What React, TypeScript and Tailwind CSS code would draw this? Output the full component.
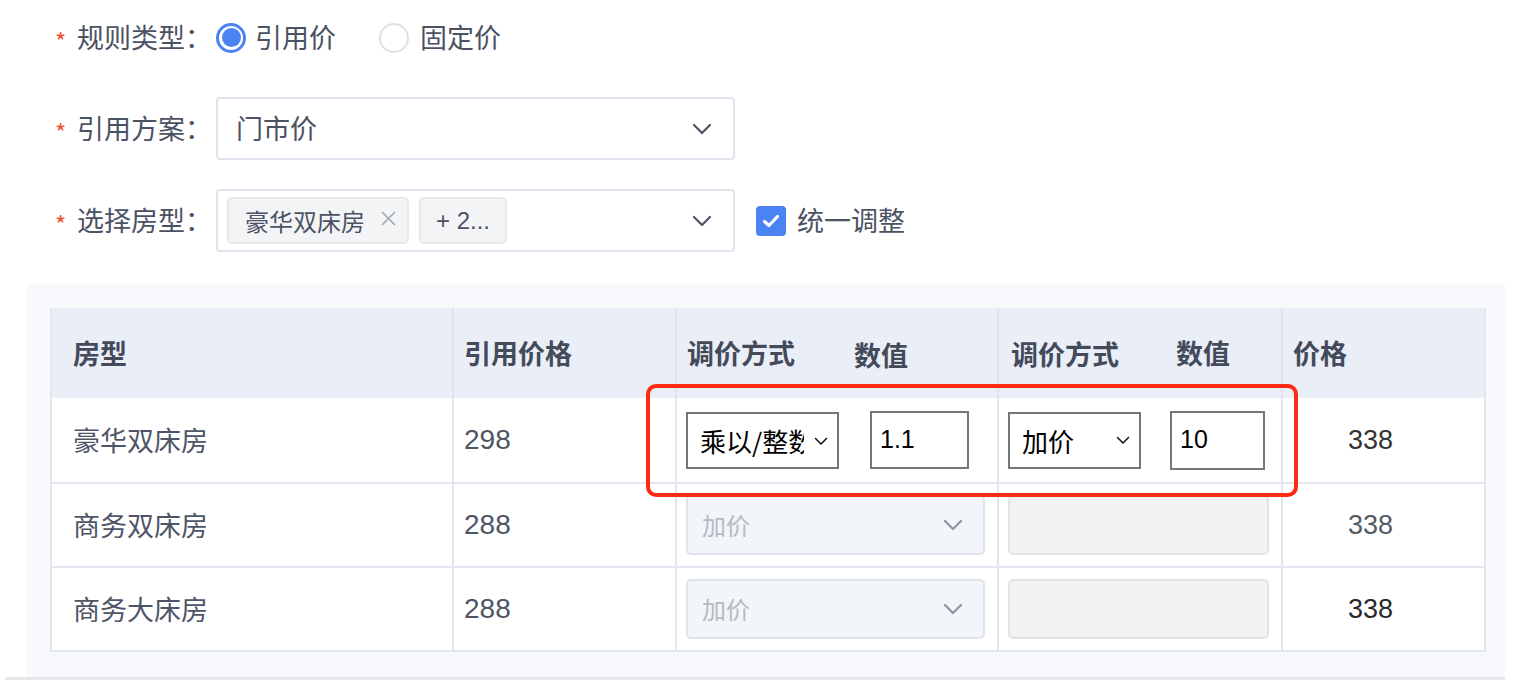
import React from 'react';

const cjk = { fontFamily: '"PingFang SC", "Noto Sans CJK SC", "Noto Sans", sans-serif' };
const sys = { fontFamily: '"Liberation Sans", "Noto Sans CJK SC", Arial, sans-serif' };

const Chevron = ({ className = '' }: { className?: string }) => (
  <svg width="20" height="12" viewBox="0 0 20 12" className={className} fill="none">
    <polyline points="2,2 10,10 18,2" stroke="currentColor" strokeWidth="2.2" strokeLinecap="round" strokeLinejoin="round" />
  </svg>
);

const SmallChevron = () => (
  <svg width="14" height="9" viewBox="0 0 14 9" fill="none">
    <polyline points="1.5,1.5 7,7 12.5,1.5" stroke="#111" strokeWidth="1.5" strokeLinecap="round" strokeLinejoin="round" />
  </svg>
);

function FormRow({ label, children, className = '' }: { label: string; children: React.ReactNode; className?: string }) {
  return (
    <div className={`flex items-center h-[63px] pl-[55px] ${className}`}>
      <span className="w-[22px] text-[24px] text-[#f0502d] leading-none pt-[6px]">*</span>
      <span className="w-[139px] text-[27px] text-[#4b5263]">{label}：</span>
      {children}
    </div>
  );
}

const rows = [
  { name: '豪华双床房', ref: '298', price: '338', priceColor: 'text-[#333]', active: true },
  { name: '商务双床房', ref: '288', price: '338', priceColor: 'text-[#555a63]', active: false },
  { name: '商务大床房', ref: '288', price: '338', priceColor: 'text-[#2a2a2a]', active: false },
];

export default function App() {
  return (
    <div className="w-[1522px] h-[692px] bg-white overflow-hidden" style={cjk}>
      {/* form */}
      <div className="pt-[6px] flex flex-col">
        <FormRow label="规则类型">
          <div className="flex items-center">
            <span className="w-[30px] h-[30px] rounded-full border-[3px] border-[#4b82f4] flex items-center justify-center">
              <span className="w-[19px] h-[19px] rounded-full bg-[#4b82f4]" />
            </span>
            <span className="ml-[9px] text-[27px] text-[#4b5263]">引用价</span>
            <span className="ml-[43px] w-[30px] h-[30px] rounded-full border-2 border-[#dde2ea]" />
            <span className="ml-[11px] text-[27px] text-[#4b5263]">固定价</span>
          </div>
        </FormRow>
        <FormRow label="引用方案" className="mt-[28px]">
          <div className="w-[519px] h-[63px] border-2 border-[#dfe3ec] rounded-[4px] flex items-center justify-between pl-[18px] pr-[21px] text-[#4b5263]">
            <span className="text-[27px]">门市价</span>
            <Chevron />
          </div>
        </FormRow>
        <FormRow label="选择房型" className="mt-[29px]">
          <div className="w-[519px] h-[63px] border-2 border-[#dfe3ec] rounded-[4px] flex items-center justify-between pl-[9px] pr-[21px] text-[#4b5263]">
            <div className="flex gap-[10px]">
              <span className="h-[47px] w-[182px] bg-[#f3f4f6] border-2 border-[#e6e8ec] rounded-[5px] flex items-center pl-[16px] text-[24px]">
                豪华双床房
                <svg width="17" height="17" viewBox="0 0 17 17" className="ml-[15px] -mt-[4px]">
                  <path d="M2 2L15 15M15 2L2 15" stroke="#a1a6b0" strokeWidth="1.6" />
                </svg>
              </span>
              <span className="h-[47px] w-[88px] bg-[#f3f4f6] border-2 border-[#e6e8ec] rounded-[5px] flex items-center pl-[15px] text-[24px]" style={sys}>
                + 2...
              </span>
            </div>
            <Chevron />
          </div>
          <span className="ml-[21px] w-[30px] h-[30px] rounded-[4px] bg-[#4b82f4] flex items-center justify-center">
            <svg width="18" height="14" viewBox="0 0 18 14">
              <polyline points="2.5,7.5 7,11.5 15.5,2.5" fill="none" stroke="#fff" strokeWidth="3.2" strokeLinecap="round" strokeLinejoin="round" />
            </svg>
          </span>
          <span className="ml-[11px] text-[27px] text-[#4b5263]">统一调整</span>
        </FormRow>
      </div>

      {/* table area */}
      <div className="mt-[32px] ml-[5px] w-[1500px] border-b-[3px] border-[#e6e7ea]">
        <div className="ml-[21px] w-[1479px] bg-[#f7f9fc] pt-[24px] pl-[24px] pb-[25px]">
          <div className="relative w-[1436px] border-l-2 border-r-2 border-b-2 border-[#e2e6ee] bg-white">
            <div className="grid grid-cols-[402px_223px_322px_284px_1fr] h-[90px] bg-[#eaeef7] text-[27px] font-bold text-[#434a5a]">
              <div className="border-r-2 border-[#e0e4ed] flex items-center pl-[21px]">房型</div>
              <div className="border-r-2 border-[#e0e4ed] flex items-center pl-[10px]">引用价格</div>
              <div className="border-r-2 border-[#e0e4ed] flex items-center pl-[10px]">
                <span>调价方式</span>
                <span className="ml-[59px] mt-[5px]">数值</span>
              </div>
              <div className="border-r-2 border-[#e0e4ed] flex items-center pl-[12px]">
                <span className="mt-[3px]">调价方式</span>
                <span className="ml-[57px] mt-[1px]">数值</span>
              </div>
              <div className="flex items-center pl-[10px]">价格</div>
            </div>
            {rows.map((r, i) => (
              <div
                key={r.name}
                className={`grid grid-cols-[402px_223px_322px_284px_1fr] h-[84px] text-[27px] text-[#4e5566] ${i > 0 ? 'border-t-2 border-[#e2e6ee]' : ''}`}
              >
                <div className="border-r-2 border-[#e2e6ee] flex items-center pl-[21px]">{r.name}</div>
                <div className="border-r-2 border-[#e2e6ee] flex items-center pl-[10px] text-[28px]" style={sys}>{r.ref}</div>
                {r.active ? (
                  <>
                    <div className="border-r-2 border-[#e2e6ee] flex items-center pl-[9px]">
                      <div className="w-[153px] h-[57px] border-2 border-[#767676] bg-white flex items-center pl-[12px] text-black">
                        <span className="w-[104px] overflow-hidden whitespace-nowrap text-[26px]">乘以/整数</span>
                        <span className="ml-[10px] mt-[2px]"><SmallChevron /></span>
                      </div>
                      <div className="ml-[31px] w-[99px] h-[58px] border-2 border-[#767676] bg-white flex items-center pl-[8px] text-[25px] text-black" style={sys}>
                        1.1
                      </div>
                    </div>
                    <div className="border-r-2 border-[#e2e6ee] flex items-center pl-[9px]">
                      <div className="w-[133px] h-[57px] border-2 border-[#767676] bg-white flex items-center pl-[12px] text-black">
                        <span className="w-[94px] text-[26px]">加价</span>
                        <SmallChevron />
                      </div>
                      <div className="ml-[29px] w-[95px] h-[59px] border-2 border-[#767676] bg-white flex items-center pl-[8px] text-[25px] text-black" style={sys}>
                        10
                      </div>
                    </div>
                  </>
                ) : (
                  <>
                    <div className="border-r-2 border-[#e2e6ee] flex items-center pl-[9px]">
                      <div className="w-[299px] h-[60px] border-2 border-[#dfe3ea] rounded-[5px] bg-[#f2f5f9] flex items-center justify-between pl-[14px] pr-[20px]">
                        <span className="text-[24px] text-[#b5bac3]">加价</span>
                        <Chevron className="text-[#8e94a0]" />
                      </div>
                    </div>
                    <div className="border-r-2 border-[#e2e6ee] flex items-center pl-[9px]">
                      <div className="w-[261px] h-[60px] border-2 border-[#e0e3e8] rounded-[5px] bg-[#f2f2f2]" />
                    </div>
                  </>
                )}
                <div className={`flex items-center pl-[65px] text-[27px] ${r.priceColor}`} style={sys}>{r.price}</div>
              </div>
            ))}
            {/* highlight */}
            <div className="absolute left-[594px] top-[76px] w-[652px] h-[113px] border-4 border-[#ff2a12] rounded-[10px] pointer-events-none" />
          </div>
        </div>
      </div>
    </div>
  );
}
